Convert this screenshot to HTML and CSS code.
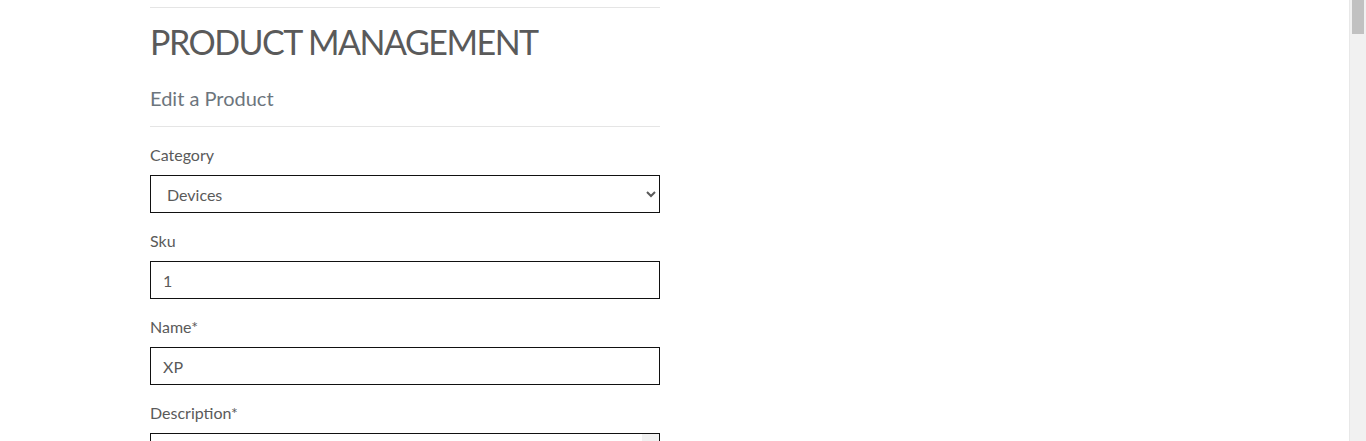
FILE: index.html
```html
<!DOCTYPE html>
<html lang="en">
<head>
<meta charset="utf-8">
<title>Product Management</title>
<link rel="stylesheet" href="styles.css">
</head>
<body>
<main class="page">
  <hr class="rule rule-top">
  <h1 class="title">PRODUCT MANAGEMENT</h1>
  <h2 class="subtitle">Edit a Product</h2>
  <hr class="rule rule-sub">
  <form class="form">
    <div class="field">
      <label class="label" for="category">Category</label>
      <select class="control select" id="category">
        <option>Devices</option>
      </select>
    </div>
    <div class="field">
      <label class="label" for="sku">Sku</label>
      <input class="control" id="sku" type="text" value="1">
    </div>
    <div class="field">
      <label class="label" for="name">Name*</label>
      <input class="control" id="name" type="text" value="XP">
    </div>
    <div class="field">
      <label class="label" for="desc">Description*</label>
      <div class="textarea-wrap">
        <textarea class="control textarea" id="desc" rows="8"></textarea>
      </div>
    </div>
  </form>
</main>
<div class="page-scrollbar" aria-hidden="true"><div class="page-scrollbar-thumb"></div></div>
</body>
</html>
```

FILE: styles.css
```css
body {
  margin: 0;
  background: #fff;
  font-family: Lato, "Open Sans", "Liberation Sans", sans-serif;
  color: #555;
}
.page {
  width: 510px;
  margin-left: 150px;
  padding-top: 7px;
}
.rule {
  border: 0;
  border-top: 1px solid #e5e5e5;
  margin: 0;
}
.title {
  margin: 14px 0 0;
  font-size: 34px;
  line-height: 1.2;
  font-weight: 400;
  letter-spacing: -1.5px;
  color: #5a5a5a;
}
.subtitle {
  margin: 23px 0 0;
  font-size: 20px;
  line-height: 1.2;
  font-weight: 400;
  color: #6c757d;
}
.rule-sub {
  margin-top: 16px;
}
.form {
  padding-top: 16px;
}
.field {
  display: flex;
  flex-direction: column;
  margin-bottom: 16px;
}
.label {
  font-size: 16px;
  line-height: 24px;
  margin-bottom: 8px;
  color: #5a5a5a;
}
.control {
  box-sizing: border-box;
  width: 100%;
  height: 38px;
  border: 1px solid #111;
  border-radius: 0;
  padding: 1px 12px 0;
  font-family: Lato, "Open Sans", "Liberation Sans", sans-serif;
  font-size: 16px;
  color: #5a5a5a;
  background: #fff;
  outline: none;
}
.textarea-wrap {
  position: relative;
}
.textarea-wrap::after {
  content: "";
  position: absolute;
  top: 1px;
  right: 1px;
  bottom: 1px;
  width: 17px;
  background: #f1f1f1;
}
.textarea {
  display: block;
  height: 150px;
  padding: 8px 12px;
  resize: none;
}
.page-scrollbar {
  position: fixed;
  top: 0;
  right: 0;
  width: 17px;
  height: 100%;
  background: #f1f1f1;
  border-left: 1px solid #e8e8e8;
  box-sizing: border-box;
}
.page-scrollbar-thumb {
  height: 34px;
  margin: 0 2px;
  background: #c1c1c1;
}
```
